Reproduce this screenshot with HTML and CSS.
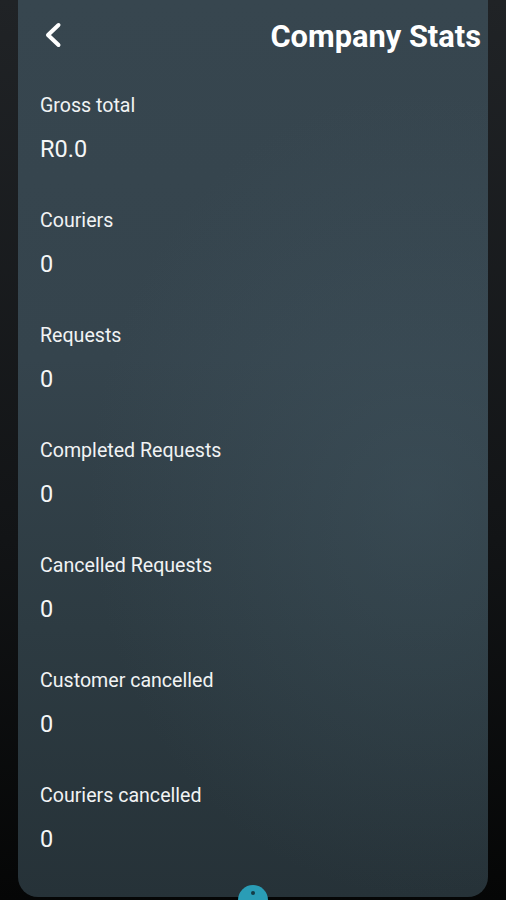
FILE: index.html
```html
<!DOCTYPE html>
<html lang="en">
<head>
<meta charset="utf-8">
<title>Company Stats</title>
<link rel="stylesheet" href="styles.css">
</head>
<body>
<div class="screen">
  <main class="card">
    <header class="header">
      <svg class="back" width="20" height="26" viewBox="0 0 20 26" aria-hidden="true">
        <path d="M15.5 3 L5 13 L15.5 23" fill="none" stroke="#ffffff" stroke-width="4" stroke-linecap="round" stroke-linejoin="round"/>
      </svg>
      <h1 class="title">Company Stats</h1>
    </header>
    <section class="stats">
      <div class="stat"><div class="label">Gross total</div><div class="value">R0.0</div></div>
      <div class="stat"><div class="label">Couriers</div><div class="value">0</div></div>
      <div class="stat"><div class="label">Requests</div><div class="value">0</div></div>
      <div class="stat"><div class="label">Completed Requests</div><div class="value">0</div></div>
      <div class="stat"><div class="label">Cancelled Requests</div><div class="value">0</div></div>
      <div class="stat"><div class="label">Customer cancelled</div><div class="value">0</div></div>
      <div class="stat"><div class="label">Couriers cancelled</div><div class="value">0</div></div>
    </section>
  </main>
  <div class="fab"><span class="fab-dot"></span></div>
</div>
</body>
</html>
```

FILE: styles.css
```css
html, body {
  margin: 0;
  padding: 0;
  height: 100%;
}
body {
  background: linear-gradient(180deg, #202326 0%, #121416 60%, #050606 100%);
  font-family: Roboto, "Noto Sans", "Liberation Sans", sans-serif;
  color: #f4f6f7;
  overflow: hidden;
}
.screen {
  position: relative;
  height: 900px;
  padding: 0 18px;
  box-sizing: border-box;
}
.card {
  height: 897px;
  box-sizing: border-box;
  border-radius: 0 0 20px 20px;
  background:
    radial-gradient(ellipse 70% 45% at 85% 55%, rgba(70, 92, 104, 0.35), rgba(70, 92, 104, 0) 100%),
    linear-gradient(180deg, #37464f 0%, #35444d 40%, #2d3b42 70%, #263238 100%);
}
.header {
  height: 72px;
  display: flex;
  align-items: center;
  justify-content: space-between;
  padding: 0 7px 0 25px;
}
.back {
  display: block;
  margin-top: -2px;
}
.title {
  margin: 0;
  font-size: 30.8px;
  font-weight: 700;
  line-height: 34px;
  color: #ffffff;
  margin-top: 2px;
}
.stats {
  display: flex;
  flex-direction: column;
  gap: 46px;
  padding: 22px 22px 0 22px;
}
.stat {
  display: flex;
  flex-direction: column;
  gap: 17px;
}
.label {
  font-size: 19.6px;
  line-height: 24px;
  color: #f1f3f4;
}
.value {
  font-size: 23.5px;
  line-height: 28px;
  color: #f4f6f7;
}
.fab {
  position: absolute;
  left: 238px;
  top: 885px;
  width: 30px;
  height: 30px;
  border-radius: 50%;
  background: #2a9db6;
}
.fab-dot {
  position: absolute;
  left: 13px;
  top: 6px;
  width: 4px;
  height: 4px;
  border-radius: 50%;
  background: #143c47;
}
```
